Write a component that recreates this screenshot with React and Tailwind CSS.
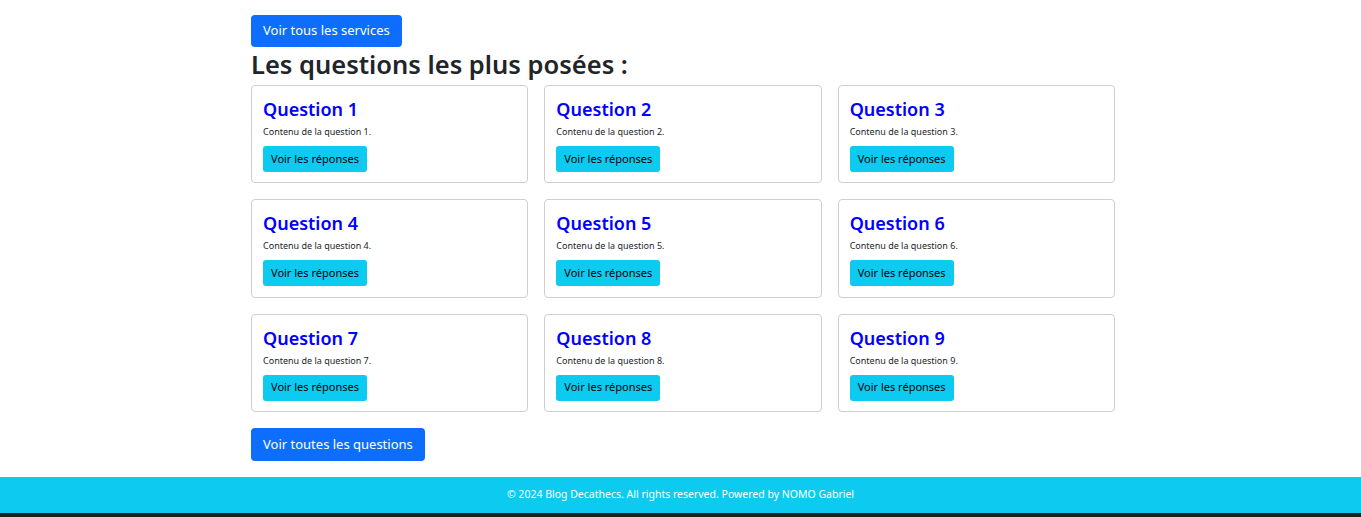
const questions = [1, 2, 3, 4, 5, 6, 7, 8, 9];

const QuestionCard = ({ n }) => {
  return (
    <div className="border border-[#cfcfcf] rounded-[4px] px-[11px] pt-[11px] pb-[10.33px] bg-white">
      <h3 className="text-[18px] leading-[24px] font-semibold text-[#0000ff]">Question {n}</h3>
      <p className="mt-[4px] text-[9px] leading-[14px] text-[#212529]">Contenu de la question {n}.</p>
      <button className="mt-[7px] h-[26px] px-[8px] rounded-[3px] bg-[#0dcaf0] text-[11px] text-black">
        Voir les réponses
      </button>
    </div>
  );
};

export default function App() {
  return (
    <div className="min-h-[517px] flex flex-col bg-white font-['Noto_Sans',sans-serif]">
      <main className="w-[864px] ml-[251px] pt-[15px] pb-[16px] flex-grow">
        <button className="h-[32px] px-[12px] rounded-[4px] bg-[#0d6efd] text-white text-[13px]">
          Voir tous les services
        </button>
        <h2 className="text-[25.5px] leading-[34px] font-semibold text-[#212529]">
          Les questions les plus posées :
        </h2>
        <div className="mt-[4px] grid grid-cols-3 gap-[16px]">
          {questions.map((n) => (
            <QuestionCard key={n} n={n} />
          ))}
        </div>
        <button className="mt-[16px] h-[33px] px-[12px] rounded-[4px] bg-[#0d6efd] text-white text-[13px]">
          Voir toutes les questions
        </button>
      </main>
      <footer className="h-[36px] bg-[#0dcaf0] flex items-center justify-center text-white text-[10.5px]">
        © 2024 Blog Decathecs. All rights reserved. Powered by NOMO Gabriel
      </footer>
      <div className="h-[4px] bg-[#1f1f1f]" />
    </div>
  );
}
